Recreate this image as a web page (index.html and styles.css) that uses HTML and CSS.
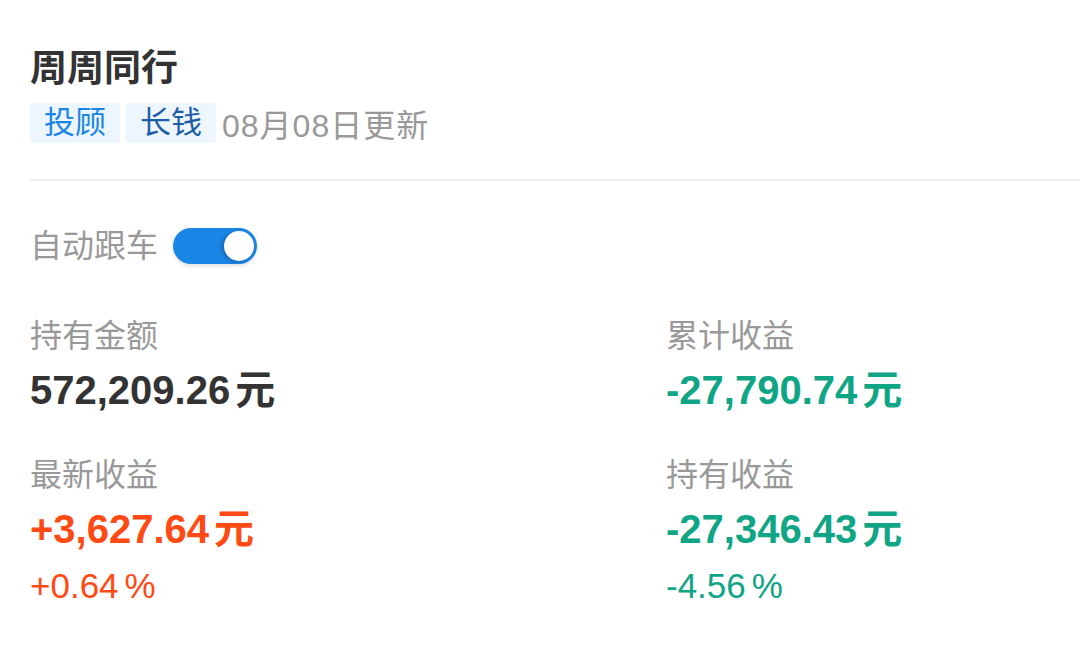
FILE: index.html
```html
<!DOCTYPE html>
<html lang="zh-CN">
<head>
  <meta charset="UTF-8">
  <meta name="viewport" content="width=device-width, initial-scale=1.0">
  <title>周周同行</title>
  <link rel="stylesheet" href="styles.css">
</head>
<body>
  <div class="header">
    <h1 class="title">周周同行</h1>
    <div class="tags">
      <span class="tag tag-blue">投顾</span>
      <span class="tag tag-dark">长钱</span>
      <span class="update">08月08日更新</span>
    </div>
  </div>

  <div class="content">
    <div class="follow">
      <span class="follow-label">自动跟车</span>
      <span class="switch"><span class="knob"></span></span>
    </div>

    <div class="stats">
      <div class="stat">
        <div class="stat-label">持有金额</div>
        <div class="stat-value">572,209.26<span class="unit">元</span></div>
      </div>
      <div class="stat">
        <div class="stat-label">累计收益</div>
        <div class="stat-value down">-27,790.74<span class="unit">元</span></div>
      </div>
      <div class="stat">
        <div class="stat-label">最新收益</div>
        <div class="stat-value up">+3,627.64<span class="unit">元</span></div>
        <div class="stat-rate up">+0.64<span class="pct">%</span></div>
      </div>
      <div class="stat">
        <div class="stat-label">持有收益</div>
        <div class="stat-value down">-27,346.43<span class="unit">元</span></div>
        <div class="stat-rate down">-4.56<span class="pct">%</span></div>
      </div>
    </div>
  </div>
</body>
</html>
```

FILE: styles.css
```css
body {
  margin: 0;
  background: #fff;
  font-family: "Liberation Sans", Arial, "Noto Sans CJK SC", sans-serif;
  color: #333;
}
.header {
  margin-left: 30px;
  padding: 43px 0 33px;
  border-bottom: 2px solid #f0f0f0;
}
.title {
  margin: 0;
  font-size: 37px;
  line-height: 52px;
  font-weight: bold;
  color: #333;
}
.tags {
  display: flex;
  align-items: center;
  gap: 6px;
  margin-top: 5px;
}
.tag {
  display: inline-block;
  height: 40px;
  line-height: 40px;
  padding: 0 14px;
  font-size: 31px;
  border-radius: 4px;
  background: #edf5ff;
}
.tag-blue {
  color: #1a86e6;
}
.tag-dark {
  color: #1c5ea6;
}
.update {
  font-size: 32px;
  letter-spacing: 1px;
  color: #999;
}
.content {
  padding: 0 30px;
}
.follow {
  display: flex;
  align-items: center;
  gap: 15px;
  margin-top: 45px;
}
.follow-label {
  font-size: 32px;
  color: #999;
  line-height: 40px;
}
.switch {
  position: relative;
  display: inline-block;
  width: 84px;
  height: 36px;
  border-radius: 18px;
  background: #1a86e6;
  box-shadow: 0 2px 4px rgba(0, 0, 0, 0.12);
}
.knob {
  position: absolute;
  right: 3px;
  top: 3px;
  width: 30px;
  height: 30px;
  border-radius: 50%;
  background: #fff;
  box-shadow: -2px 1px 4px rgba(0, 0, 0, 0.25);
}
.stats {
  display: grid;
  grid-template-columns: 636px 1fr;
  row-gap: 41px;
  margin-top: 50px;
}
.stat-label {
  font-size: 32px;
  line-height: 40px;
  color: #999;
}
.stat-value {
  margin-top: 10px;
  font-size: 40px;
  line-height: 48px;
  font-weight: bold;
  color: #333;
}
.unit {
  margin-left: 5px;
}
.stat-rate {
  margin-top: 13px;
  font-size: 35px;
  line-height: 40px;
}
.pct {
  margin-left: 6px;
}
.up {
  color: #ff4a14;
}
.down {
  color: #10a585;
}
```
